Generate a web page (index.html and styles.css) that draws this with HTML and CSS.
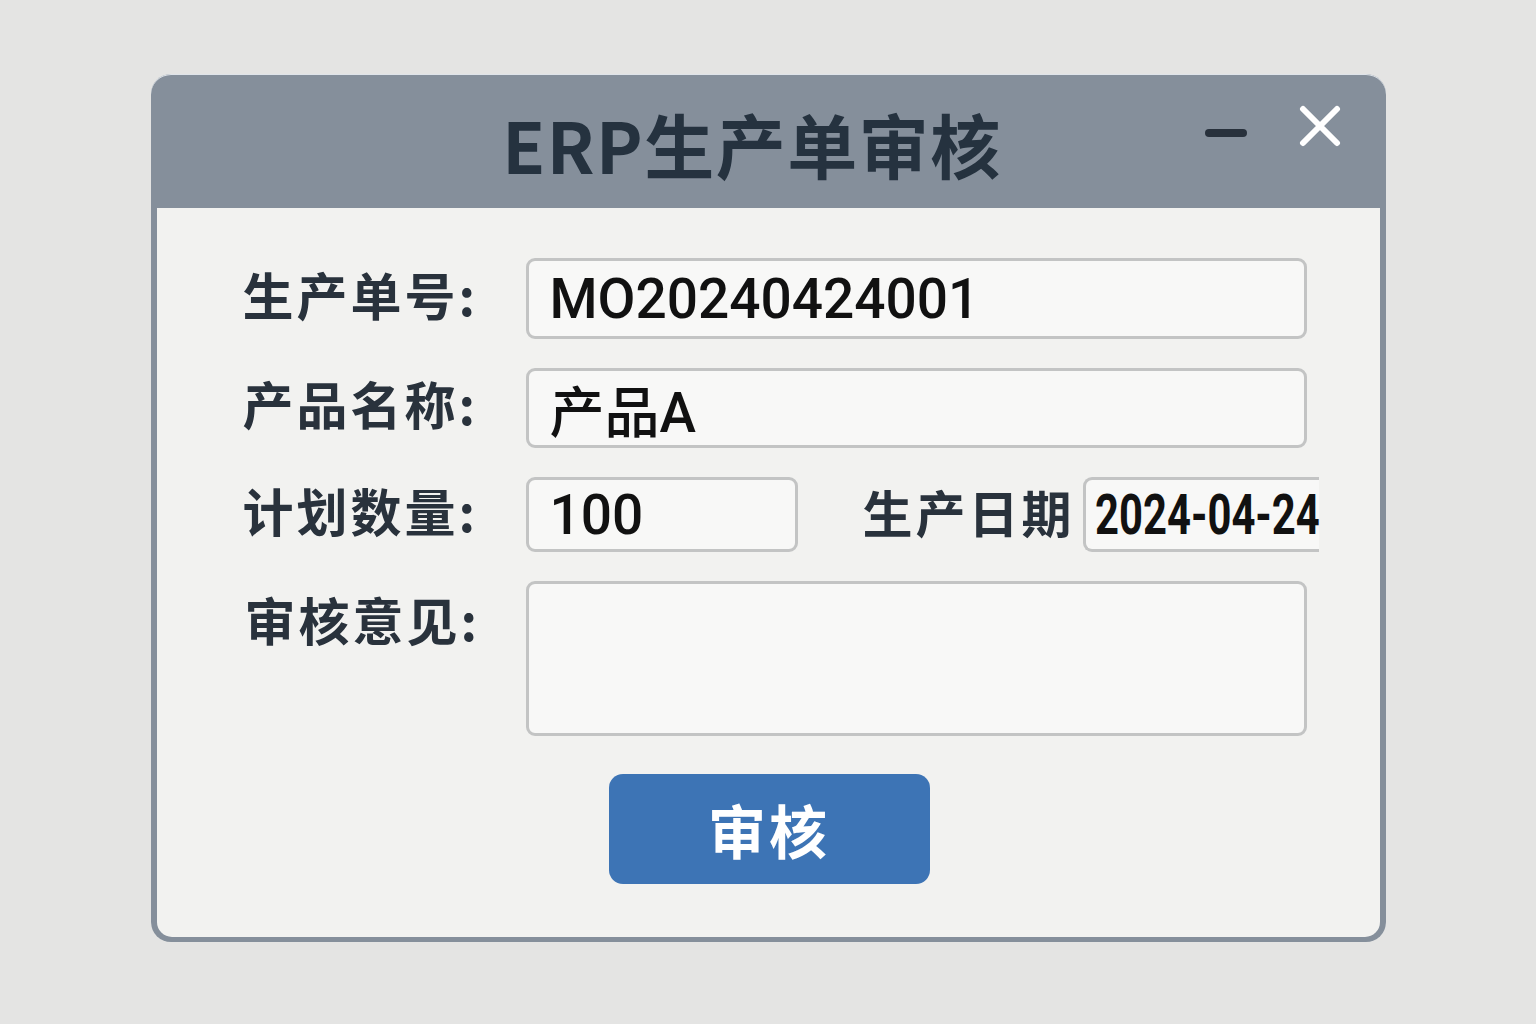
FILE: index.html
```html
<!DOCTYPE html>
<html lang="zh-CN">
<head>
  <meta charset="UTF-8">
  <meta name="viewport" content="width=device-width, initial-scale=1.0">
  <title>ERP生产单审核</title>
  <link rel="stylesheet" href="styles.css">
</head>
<body>

  <div class="window">
    <div class="titlebar">
      <div></div>
      <h1 class="title">ERP生产单审核</h1>
      <div class="controls">
        <span class="btn-min"></span>
        <svg class="btn-close" width="42" height="42" viewBox="0 0 42 42">
          <path d="M4 4 L38 38 M38 4 L4 38" stroke="#fff" stroke-width="6" stroke-linecap="round" fill="none"/>
        </svg>
      </div>
    </div>

    <div class="content">
      <div class="form-grid">
        <label class="label">生产单号:</label>
        <div class="field">MO20240424001</div>

        <label class="label">产品名称:</label>
        <div class="field">产品A</div>

        <label class="label">计划数量:</label>
        <div class="row-inline">
          <div class="field field-qty">100</div>
          <label class="label label-date">生产日期</label>
          <div class="field field-date"><span>2024-04-24</span></div>
        </div>

        <label class="label label-top">审核意见:</label>
        <div class="field field-area"></div>
      </div>

      <div class="actions">
        <button type="button" class="button">审核</button>
      </div>
    </div>
  </div>

</body>
</html>
```

FILE: styles.css
```css
body {
  margin: 0;
  background: #e4e4e3;
  display: flex;
  justify-content: center;
  padding-top: 74px;
  font-family: "Noto Sans CJK SC", "Noto Sans", sans-serif;
}
.window {
  width: 1235px;
  height: 868px;
  box-sizing: border-box;
  background: #858f9b;
  border-radius: 20px;
  padding: 0 6px 5px;
  display: flex;
  flex-direction: column;
  box-shadow: inset 0 1px 0 #dfe4ea;
}
.titlebar {
  height: 134px;
  flex-shrink: 0;
  display: grid;
  grid-template-columns: 1fr auto 1fr;
}
.title {
  margin: 0 32px 0 0;
  align-self: center;
  padding-top: 6px;
  font-size: 70px;
  font-weight: 700;
  letter-spacing: 1.5px;
  color: #25323f;
  line-height: 1;
}
.controls {
  justify-self: end;
  display: flex;
  align-items: flex-start;
  gap: 52px;
  padding: 31px 39px 0 0;
}
.btn-min {
  display: block;
  width: 42px;
  height: 8px;
  margin-top: 24px;
  border-radius: 4px;
  background: #28313c;
}
.btn-close {
  display: block;
}
.content {
  flex: 1;
  background: #f2f2f0;
  border-radius: 0 0 15px 15px;
  padding: 50px 0 0 86px;
}
.form-grid {
  display: grid;
  grid-template-columns: 237px 781px;
  grid-template-rows: 81px 80px 75px 155px;
  column-gap: 46px;
  row-gap: 29px;
}
.label {
  align-self: center;
  margin-bottom: 8px;
  font-size: 51px;
  font-weight: 700;
  letter-spacing: 3px;
  line-height: 1.4;
  color: #29323c;
  white-space: nowrap;
}
.label-top {
  align-self: start;
  margin: 3px 0 0;
  padding-left: 2px;
}
.field {
  box-sizing: border-box;
  height: 100%;
  background: #f8f8f7;
  border: 3px solid #c3c4c4;
  border-radius: 9px;
  padding-left: 21px;
  display: flex;
  align-items: center;
  font-family: Roboto, "Noto Sans CJK SC", sans-serif;
  font-size: 55px;
  font-weight: 500;
  color: #111;
}
.row-inline {
  display: flex;
  align-items: center;
  height: 100%;
}
.field-qty {
  width: 272px;
  flex-shrink: 0;
}
.label-date {
  margin: 0 0 8px 65px;
  font-size: 50px;
  letter-spacing: 3px;
}
.field-date {
  width: 236px;
  flex-shrink: 0;
  margin-left: 8px;
  padding-left: 9px;
  border-right: none;
  border-radius: 9px 0 0 9px;
}
.field-date span {
  display: inline-block;
  font-weight: 700;
  transform: scaleX(0.76);
  transform-origin: left center;
  white-space: nowrap;
}
.field-area {
  height: 155px;
}
.actions {
  display: flex;
  justify-content: center;
  padding-left: 2px;
  margin: 38px 86px 0 0;
}
.button {
  width: 321px;
  height: 110px;
  background: #3d74b5;
  border: none;
  border-radius: 14px;
  color: #fff;
  font-family: "Noto Sans CJK SC", sans-serif;
  font-size: 58px;
  font-weight: 700;
  letter-spacing: 3px;
  cursor: pointer;
}
```
